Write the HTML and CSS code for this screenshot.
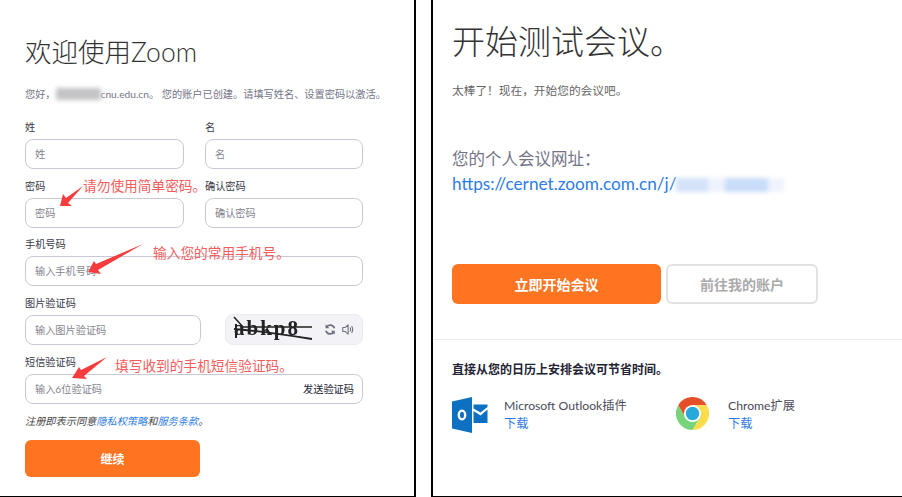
FILE: index.html
```html
<!DOCTYPE html>
<html lang="zh-CN">
<head>
  <meta charset="UTF-8" />
  <meta name="viewport" content="width=device-width, initial-scale=1.0"/>
  <title>Zoom</title>
  <link rel="stylesheet" href="styles.css">
</head>
<body>

  <div class="page">

    <!-- sign up -->
    <div class="panel signup">
      <h1 class="signup-title">欢迎使用Zoom</h1>
      <p class="signup-hello">您好，<span class="blur-mail"></span>cnu.edu.cn。 您的账户已创建。请填写姓名、设置密码以激活。</p>

      <div class="form-row two">
        <div class="field">
          <label>姓</label>
          <input class="box" placeholder="姓">
        </div>
        <div class="field">
          <label>名</label>
          <input class="box" placeholder="名">
        </div>
      </div>

      <div class="form-row two">
        <div class="field">
          <label>密码</label>
          <input class="box" placeholder="密码">
        </div>
        <div class="field">
          <label>确认密码</label>
          <input class="box" placeholder="确认密码">
        </div>
      </div>

      <div class="form-row">
        <div class="field">
          <label>手机号码</label>
          <input class="box" placeholder="输入手机号码">
        </div>
      </div>

      <div class="form-row captcha-row">
        <div class="field">
          <label>图片验证码</label>
          <input class="box" placeholder="输入图片验证码">
        </div>
        <div class="captcha">
          <div class="captcha-img">
            <span class="captcha-text">abkp8</span>
            <svg class="captcha-lines" viewBox="0 0 82 26" width="82" height="26">
              <path d="M2 1 L11 11 L80 11" fill="none" stroke="#222" stroke-width="1.5"/>
              <path d="M2 13 Q30 15 80 23" fill="none" stroke="#222" stroke-width="1.8"/>
              <path d="M4 8V22" stroke="#222" stroke-width="2"/>
            </svg>
          </div>
          <svg class="captcha-icon" viewBox="0 0 16 16" width="13" height="13">
            <path d="M13.5 6.5A5.8 5.8 0 0 0 3 5" fill="none" stroke="#6e7080" stroke-width="2.2"/>
            <path d="M2 1.5V6.5H7Z" fill="#6e7080"/>
            <path d="M2.5 9.5A5.8 5.8 0 0 0 13 11" fill="none" stroke="#6e7080" stroke-width="2.2"/>
            <path d="M14 14.5V9.5H9Z" fill="#6e7080"/>
          </svg>
          <svg class="captcha-icon" viewBox="0 0 16 16" width="13" height="13">
            <path d="M1 5.5H4L8 2V14L4 10.5H1Z" fill="none" stroke="#6e7080" stroke-width="1.4" stroke-linejoin="round"/>
            <path d="M10.5 5.5Q12 8 10.5 10.5M12.5 3.5Q15.5 8 12.5 12.5" fill="none" stroke="#6e7080" stroke-width="1.4"/>
          </svg>
        </div>
      </div>

      <div class="form-row">
        <div class="field">
          <label>短信验证码</label>
          <div class="box sms-box">
            <input placeholder="输入6位验证码">
            <span>发送验证码</span>
          </div>
        </div>
      </div>

      <p class="terms">注册即表示同意<a href="#">隐私权策略</a>和<a href="#">服务条款</a>。</p>
      <button class="btn btn-orange continue">继续</button>

      <!-- red notes drawn over the form -->
      <svg class="arrows" width="414" height="496" viewBox="0 0 414 496">
        <polygon points="83,186 68,203 72,206 60,206 63,194 66,198"/>
        <polygon points="143,244 98,270 101,274 88,272 94,261 96,264"/>
        <polygon points="107,357 84,376 87,379 72,378 79,367 81,370"/>
      </svg>
      <span class="note note-pass">请勿使用简单密码。</span>
      <span class="note note-phone">输入您的常用手机号。</span>
      <span class="note note-sms">填写收到的手机短信验证码。</span>
    </div>

    <!-- test meeting -->
    <div class="panel start">
      <div class="start-top">
        <h1 class="start-title">开始测试会议。</h1>
        <p class="start-sub">太棒了！现在，开始您的会议吧。</p>
        <p class="url-label">您的个人会议网址：</p>
        <p class="url-line"><a href="#">https://cernet.zoom.com.cn/j/</a><span class="blur-url"></span></p>
        <div class="start-btns">
          <button class="btn btn-orange btn-start">立即开始会议</button>
          <button class="btn btn-line">前往我的账户</button>
        </div>
      </div>

      <div class="start-bottom">
        <h3>直接从您的日历上安排会议可节省时间。</h3>
        <div class="plugins">
          <div class="plugin outlook">
            <svg viewBox="0 0 36 36" width="36" height="36">
              <path d="M0 4.5L20 0V36L0 31.5Z" fill="#0e70c0"/>
              <path d="M21.5 7.5H35.5V10L28.5 15.5L21.5 11.5Z" fill="#0e70c0"/>
              <path d="M21.5 14L28.5 18.5L35.5 12.5V26H21.5Z" fill="#0e70c0"/>
              <ellipse cx="10" cy="18" rx="3.2" ry="4.4" fill="none" stroke="#fff" stroke-width="2.4"/>
            </svg>
            <div class="plugin-text">
              <div>Microsoft Outlook插件</div>
              <a href="#">下载</a>
            </div>
          </div>
          <div class="plugin chrome">
            <svg viewBox="0 0 48 48" width="33" height="33">
              <path d="M3.2 12A24 24 0 0 1 44.8 12L24 12L13.6 30Z" fill="#e5502a"/>
              <path d="M44.8 12A24 24 0 0 1 24 48L34.4 30L24 12Z" fill="#fbdc4b"/>
              <path d="M24 48A24 24 0 0 1 3.2 12L13.6 30L34.4 30Z" fill="#77d47a"/>
              <circle cx="24" cy="24" r="12.5" fill="#fff"/>
              <circle cx="24" cy="24" r="9.8" fill="#27a9dc"/>
            </svg>
            <div class="plugin-text">
              <div>Chrome扩展</div>
              <a href="#">下载</a>
            </div>
          </div>
        </div>
      </div>
    </div>

  </div>

</body>
</html>
```

FILE: styles.css
```css
html, body {
  margin: 0;
  padding: 0;
  background: #fff;
}

body {
  font-family: Lato, "Noto Sans CJK SC", sans-serif;
  color: #232333;
}

h1, h3, p {
  margin: 0;
  font-weight: 400;
}

a {
  color: #2d7ce5;
  text-decoration: none;
}

.page {
  display: flex;
  gap: 15px;
  width: 902px;
  height: 497px;
  overflow: hidden;
}

.panel {
  position: relative;
  box-sizing: border-box;
  height: 497px;
  border-bottom: 1px solid #000;
}

/* left */
.signup {
  width: 416px;
  padding: 34px 0 0 25px;
  border-right: 2px solid #000;
}

.signup-title {
  font-size: 26.5px;
  line-height: 36px;
  font-weight: 300;
  color: #333;
}

.signup-hello {
  margin-top: 17px;
  font-size: 10.2px;
  line-height: 14px;
  white-space: nowrap;
  color: #747487;
}

.blur-mail {
  display: inline-block;
  width: 45px;
  height: 12px;
  vertical-align: -2px;
  background: #c4c4c7;
  filter: blur(2px);
}

.form-row {
  width: 338px;
  margin-bottom: 8.5px;
}

.signup-hello + .form-row {
  margin-top: 18px;
}

.two {
  display: grid;
  grid-template-columns: 159px 158px;
  gap: 21px;
}

.captcha-row {
  display: grid;
  grid-template-columns: 176px 138px;
  gap: 24px;
  align-items: end;
  margin-bottom: 9px;
}

.field label {
  display: block;
  height: 20px;
  font-size: 10.2px;
  line-height: 16px;
  color: #3a3a4a;
}

.box {
  display: block;
  box-sizing: border-box;
  width: 100%;
  height: 30px;
  padding: 0 9px;
  border: 1px solid #c9c9d6;
  border-radius: 8px;
  background: #fff;
  font-family: inherit;
  font-size: 10.2px;
  outline: none;
}

.box::placeholder,
.sms-box input::placeholder {
  color: #85858f;
}

.captcha {
  display: flex;
  align-items: center;
  box-sizing: border-box;
  height: 31px;
  padding: 0 8px 0 6px;
  border: 1px solid #ebebf2;
  border-radius: 8px;
  background: #f2f2f7;
}

.captcha-img {
  position: relative;
  width: 82px;
  height: 26px;
  margin-right: 10px;
  filter: blur(0.5px);
}

.captcha-text {
  display: block;
  padding-left: 2px;
  font-family: "Liberation Serif", serif;
  font-size: 21px;
  font-weight: 700;
  line-height: 25px;
  letter-spacing: 2px;
  color: #222;
}

.captcha-lines {
  position: absolute;
  left: 0;
  top: 0;
}

.captcha-icon {
  margin-left: 5px;
}

.sms-box {
  display: flex;
  align-items: center;
  justify-content: space-between;
  padding-right: 8px;
}

.sms-box input {
  flex: 1;
  min-width: 0;
  padding: 0;
  border: none;
  outline: none;
  font-family: inherit;
  font-size: 10.2px;
}

.sms-box span {
  font-size: 10.2px;
  color: #232333;
}

.terms {
  margin-top: 9px;
  font-size: 10.2px;
  line-height: 16px;
  font-style: italic;
  color: #444;
}

.btn {
  box-sizing: border-box;
  border-radius: 6px;
  font-family: inherit;
  font-weight: 700;
  cursor: pointer;
}

.btn-orange {
  border: none;
  background: #ff7421;
  color: #fff;
}

.continue {
  display: block;
  width: 175px;
  height: 37px;
  margin-top: 11px;
  font-size: 12px;
}

.arrows {
  position: absolute;
  left: 0;
  top: 0;
  pointer-events: none;
}

.arrows polygon {
  fill: #f63c3c;
}

.note {
  position: absolute;
  font-size: 13.7px;
  line-height: 18px;
  white-space: nowrap;
  color: #f45d5d;
}

.note-pass { left: 83px; top: 177px; }
.note-phone { left: 153px; top: 244px; }
.note-sms { left: 115px; top: 357px; }

/* right */
.start {
  flex: 1;
  border-left: 2px solid #000;
}

.start-top {
  height: 340px;
  box-sizing: border-box;
  padding: 18px 0 0 19px;
  border-bottom: 1px solid #ececec;
}

.start-title {
  font-size: 33px;
  line-height: 46px;
  font-weight: 300;
  color: #333;
}

.start-sub {
  margin-top: 17px;
  font-size: 11.7px;
  line-height: 18px;
  color: #666;
}

.url-label {
  margin-top: 48px;
  font-size: 16.5px;
  line-height: 24px;
  color: #747487;
}

.url-line {
  margin-top: 1px;
  font-size: 17.2px;
  line-height: 24px;
  white-space: nowrap;
}

.blur-url {
  display: inline-block;
  width: 108px;
  height: 14px;
  vertical-align: -2px;
  background: linear-gradient(90deg, #d4e2fa 0 30%, #eef3fd 30% 45%, #c9dcf8 45% 85%, #eef3fd 85%);
  filter: blur(2px);
}

.start-btns {
  display: flex;
  gap: 5px;
  margin-top: 68px;
}

.btn-start {
  width: 209px;
  height: 40px;
  font-size: 14px;
}

.btn-line {
  width: 152px;
  height: 40px;
  border: 2px solid #e2e2e2;
  background: #fff;
  color: #aaa;
  font-size: 14px;
}

.start-bottom {
  padding: 21px 0 0 19px;
}

.start-bottom h3 {
  font-size: 12px;
  line-height: 18px;
  font-weight: 700;
  color: #232333;
}

.plugins {
  display: flex;
  margin-top: 18px;
}

.plugin {
  display: flex;
  align-items: flex-start;
}

.outlook {
  width: 224px;
}

.plugin-text {
  margin-left: 16px;
  font-size: 12.2px;
  line-height: 18px;
  color: #4a4a5a;
}

.chrome .plugin-text {
  margin-left: 19px;
}
```
